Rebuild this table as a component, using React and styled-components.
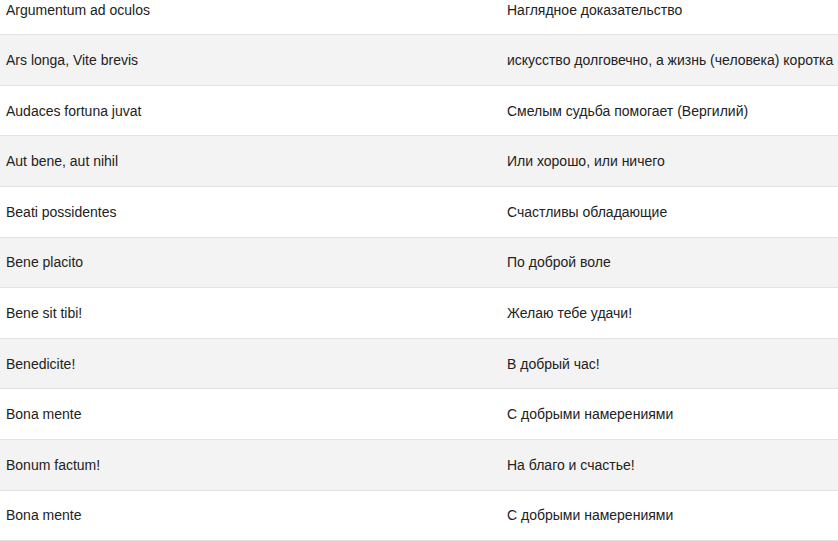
import React from 'react'
import styled, { createGlobalStyle } from 'styled-components'

const GlobalStyle = createGlobalStyle`
  html, body {
    margin: 0;
    padding: 0;
    background: #fff;
    overflow: hidden;
  }
  body {
    font-family: "Liberation Sans", Arial, sans-serif;
    color: #222;
  }
`

const Table = styled.div`
  margin-top: -15.3px;
  width: 100%;
`

const Row = styled.div`
  display: grid;
  grid-template-columns: 501px 1fr;
  align-items: center;
  height: 50.6px;
  box-sizing: border-box;
  border-bottom: 1px solid #e3e3e3;
  background: ${p => (p.$striped ? '#f3f3f3' : '#fff')};
`

const Cell = styled.div`
  padding: 0 6px;
  font-size: 14px;
  line-height: 18px;
  white-space: nowrap;
  color: #222;
`

const rows = [
  ['Argumentum ad oculos', 'Наглядное доказательство'],
  ['Ars longa, Vite brevis', 'искусство долговечно, а жизнь (человека) коротка'],
  ['Audaces fortuna juvat', 'Смелым судьба помогает (Вергилий)'],
  ['Aut bene, aut nihil', 'Или хорошо, или ничего'],
  ['Beati possidentes', 'Счастливы обладающие'],
  ['Bene placito', 'По доброй воле'],
  ['Bene sit tibi!', 'Желаю тебе удачи!'],
  ['Benedicite!', 'В добрый час!'],
  ['Bona mente', 'С добрыми намерениями'],
  ['Bonum factum!', 'На благо и счастье!'],
  ['Bona mente', 'С добрыми намерениями'],
]

export default function App() {
  return (
    <>
      <GlobalStyle />
      <Table>
        {rows.map(([lat, ru], i) => (
          <Row key={i} $striped={i % 2 === 1}>
            <Cell>{lat}</Cell>
            <Cell>{ru}</Cell>
          </Row>
        ))}
      </Table>
    </>
  )
}
